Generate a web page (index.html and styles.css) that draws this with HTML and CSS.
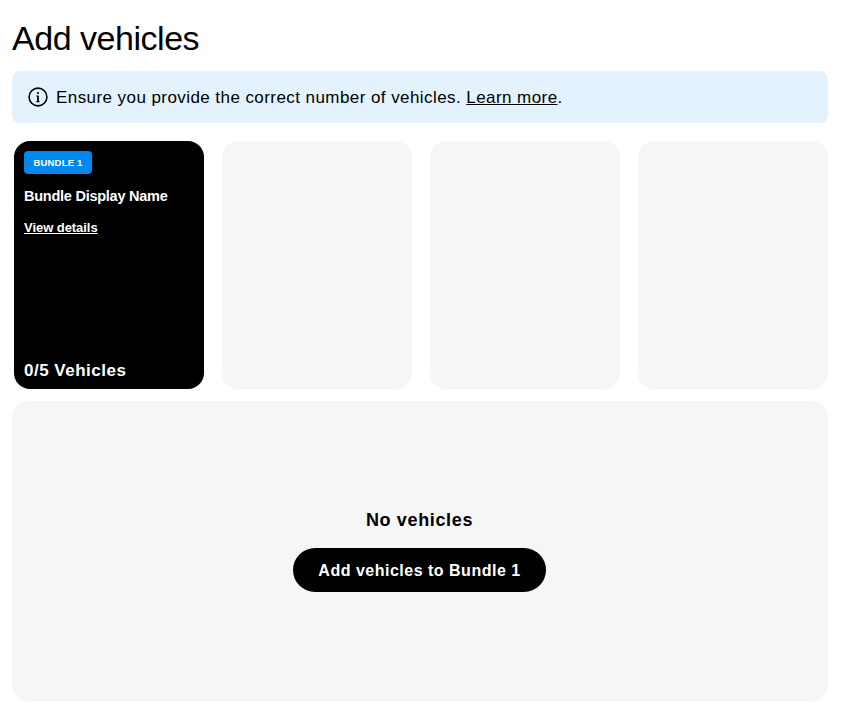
FILE: index.html
```html
<!DOCTYPE html>
<html lang="en">
<head>
<meta charset="utf-8">
<title>Add vehicles</title>
<link rel="stylesheet" href="styles.css">
</head>
<body>
<main class="page">
  <h1 class="title">Add vehicles</h1>
  <div class="notice">
    <svg class="info-icon" width="20" height="20" viewBox="0 0 20 20" fill="none" stroke="#000">
      <circle cx="10" cy="10" r="8.9" stroke-width="1.6"/>
      <path d="M10 8.8V14.6" stroke-width="1.8"/>
      <path d="M8.4 9H10M8.4 14.6H11.6" stroke-width="1.1"/>
      <circle cx="10" cy="6" r="1.1" fill="#000" stroke="none"/>
    </svg>
    <p class="notice-text">Ensure you provide the correct number of vehicles. <a href="#" class="notice-link">Learn more</a>.</p>
  </div>
  <section class="bundles">
    <article class="bundle bundle-active">
      <div class="bundle-top">
        <span class="badge">BUNDLE 1</span>
        <h2 class="bundle-name">Bundle Display Name</h2>
        <a href="#" class="details-link">View details</a>
      </div>
      <div class="bundle-count">0/5 Vehicles</div>
    </article>
    <div class="bundle bundle-empty"></div>
    <div class="bundle bundle-empty"></div>
    <div class="bundle bundle-empty"></div>
  </section>
  <section class="vehicles">
    <h3 class="vehicles-title">No vehicles</h3>
    <button class="add-button" type="button">Add vehicles to Bundle 1</button>
  </section>
</main>
</body>
</html>
```
FILE: styles.css
```css
* { box-sizing: border-box; }
html, body { margin: 0; padding: 0; background: #fff; }
body { font-family: "Liberation Sans", Arial, sans-serif; color: #000; }
.page { width: 850px; height: 726px; padding: 16px 22px 0 12px; display: flex; flex-direction: column; }
.title { margin: 0; font-size: 34px; line-height: 44px; font-weight: 400; letter-spacing: -0.47px; height: 55px; }
.notice { height: 52px; background: #e3f2fd; border-radius: 8px; display: flex; align-items: center; padding: 0 16px; gap: 8px; }
.info-icon { flex: none; }
.notice-text { margin: 2px 0 0; font-size: 17px; line-height: 24px; letter-spacing: 0.43px; }
.notice-link { color: #000; text-decoration: underline; }
.bundles { margin-top: 18px; padding: 0 0 0 2px; display: grid; grid-template-columns: repeat(4, 190px); gap: 18px; }
.bundle { height: 248px; border-radius: 16px; }
.bundle-empty { background: #f6f6f6; }
.bundle-active { background: #000; color: #fff; padding: 10px 10px 7px; display: flex; flex-direction: column; justify-content: space-between; }
.bundle-top { display: flex; flex-direction: column; align-items: flex-start; }
.badge { background: #0088ef; border-radius: 4px; height: 23px; width: 68px; font-size: 9.5px; font-weight: 700; line-height: 23px; text-align: center; letter-spacing: 0.2px; }
.bundle-name { margin: 12px 0 0; font-size: 14.5px; line-height: 20px; font-weight: 700; letter-spacing: -0.25px; }
.details-link { margin-top: 13px; color: #fff; font-size: 13px; line-height: 18px; font-weight: 700; text-decoration: underline; letter-spacing: -0.05px; }
.bundle-count { font-size: 17px; line-height: 22px; font-weight: 700; letter-spacing: 0.5px; }
.vehicles { margin-top: 12px; height: 300px; background: #f6f6f6; border-radius: 16px; display: flex; flex-direction: column; align-items: center; padding: 107px 1px 0 0; }
.vehicles-title { margin: 0; font-size: 18px; line-height: 24px; font-weight: 700; letter-spacing: 0.65px; }
.add-button { margin-top: 16px; width: 253px; height: 44px; padding: 2px 0 0; border: 0; border-radius: 22px; background: #000; color: #fff; font: 700 16px/20px "Liberation Sans", Arial, sans-serif; letter-spacing: 0.5px; }
```
